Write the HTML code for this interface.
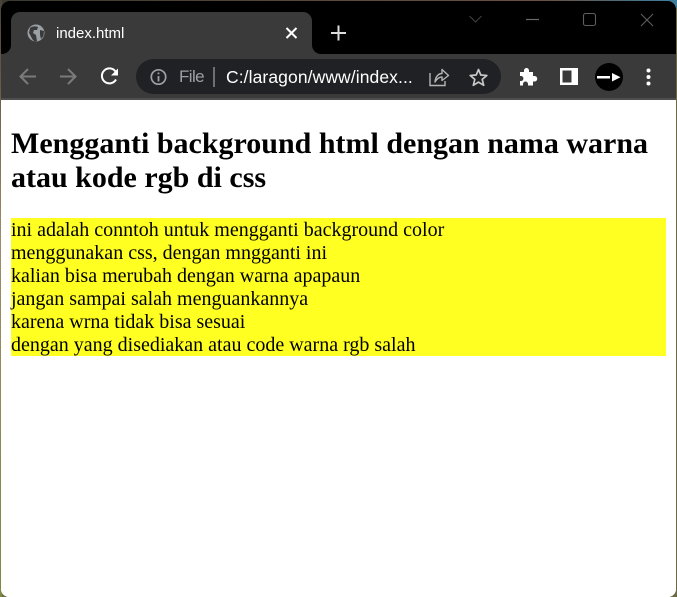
<!DOCTYPE html>
<html>
<head>
<meta charset="utf-8">
<style>
html,body{margin:0;padding:0;width:677px;height:597px;overflow:hidden;background:#6b6a45;}
#bgt{position:absolute;left:0;top:0;width:677px;height:8px;background:linear-gradient(90deg,#3a3a30 0,#5b4a3a 50%,#6a5040 80%,#3c7fa0 100%);}
#bgl{position:absolute;left:0;top:0;width:2px;height:597px;background:linear-gradient(180deg,#4a4238 0,#a08a6a 40%,#7c8a40 100%);}
#win{position:absolute;left:1px;top:1px;width:675px;height:596px;background:#fff;border-radius:8px 8px 8px 8px;overflow:hidden;}
#title{position:absolute;left:0;top:0;width:675px;height:53px;background:#000;}
#tool{position:absolute;left:0;top:53px;width:675px;height:44px;background:#3a3a3a;}
#sep{position:absolute;left:0;top:97px;width:675px;height:2px;background:#4e4e4e;}
#tab{position:absolute;left:10px;top:11px;width:301px;height:43px;background:#3a3a3a;border-radius:9px 9px 0 0;}
.t{position:absolute;white-space:nowrap;font-family:"Liberation Sans",sans-serif;}
#page{position:absolute;left:0;top:99px;width:675px;height:497px;background:#fff;}
h2{position:absolute;left:10px;top:27px;margin:0;width:655px;font:bold 30px/34px "Liberation Serif",serif;color:#000;}
#box{position:absolute;left:10px;top:118px;width:655px;height:138px;background:#ffff22;}
#txt{position:absolute;left:10px;top:119px;font:20px/23px "Liberation Serif",serif;color:#000;white-space:nowrap;}
svg{position:absolute;left:0;top:0;}
</style>
</head>
<body>
<div id="bgt"></div>
<div id="bgl"></div>
<div id="win">
  <div id="title"></div>
  <div id="tool"></div>
  <div id="sep"></div>
  <div id="tab"></div>
  <div class="t" style="left:55px;top:24px;font-size:15px;line-height:17px;color:#fff;">index.html</div>
  <div style="position:absolute;left:135px;top:58px;width:365px;height:35px;border-radius:18px;background:#202124;"></div>
  <div class="t" style="left:178px;top:66px;font-size:17px;letter-spacing:-.6px;line-height:20px;color:#9aa0a6;">File</div>
  <div style="position:absolute;left:212px;top:66px;width:2px;height:20px;background:#6d6f73;"></div>
  <div class="t" style="left:225px;top:66px;font-size:17.5px;letter-spacing:.09px;line-height:20px;color:#fff;">C:/laragon/www/index...</div>
  <div id="page">
    <h2>Mengganti background html dengan nama warna<br>atau kode rgb di css</h2>
    <div id="box"></div>
    <div id="txt">ini adalah conntoh untuk mengganti background color<br>menggunakan css, dengan mngganti ini<br>kalian bisa merubah dengan warna apapaun<br>jangan sampai salah menguankannya<br>karena wrna tidak bisa sesuai<br>dengan yang disediakan atau code warna rgb salah</div>
  </div>
</div>
<svg width="677" height="597" viewBox="0 0 677 597" fill="none">
  <!-- tab corners -->
  <path d="M2 54C7 54 11 50 11 45V54Z" fill="#3a3a3a"/>
  <path d="M312 45C312 50 316 54 321 54H312Z" fill="#3a3a3a"/>
  <!-- globe -->
  <circle cx="36" cy="33" r="8.5" fill="#9aa0a6"/>
  <path d="M30 28C32 26 36 26 38 27L37 30L34 30L33 33L36 35L37 41L35 41.500C32 40 31 36 29 33Z" fill="#3a3a3a"/>
  <path d="M40 30L44 31L43.500 36L41 39L40 35Z" fill="#3a3a3a"/>
  <!-- tab close -->
  <path d="M286.500 28L296.500 38M296.500 28L286.500 38" stroke="#fff" stroke-width="2"/>
  <!-- new tab -->
  <path d="M338.500 25.500V40.500M331 33H346" stroke="#dcdcdc" stroke-width="2"/>
  <!-- window controls -->
  <path d="M469.500 16L475.500 22L481.500 16" stroke="#3f3f3f" stroke-width="1.100"/>
  <path d="M526 19.500H539" stroke="#6a6a6a" stroke-width="1.200"/>
  <rect x="583.500" y="13.500" width="12" height="12" rx="2" stroke="#5e5e5e" stroke-width="1.100"/>
  <path d="M641 14L653 26M653 14L641 26" stroke="#5e5e5e" stroke-width="1.100"/>
  <!-- back -->
  <path d="M36 76.500H21M28 69L20.500 76.500L28 84" stroke="#7b7b7b" stroke-width="2"/>
  <!-- forward -->
  <path d="M60 76.500H75M68 69L75.500 76.500L68 84" stroke="#7b7b7b" stroke-width="2"/>
  <!-- reload -->
  <path d="M116 79.500A7.500 7.500 0 1 1 115.500 71.500" stroke="#fff" stroke-width="2"/>
  <path d="M118 68.500V75.500H111Z" fill="#fff"/>
  <!-- info -->
  <circle cx="158.500" cy="77" r="7.200" stroke="#9aa0a6" stroke-width="1.700"/>
  <path d="M158.500 76V81.500M158.500 72.500V74.300" stroke="#9aa0a6" stroke-width="1.800"/>
  <!-- share -->
  <path d="M430 73V85.500H445V81" stroke="#b5b5b5" stroke-width="1.400"/>
  <path d="M435 82C435.500 76 439 73.500 442 73.500V69.500L448.500 75.500L442 80.500V77C439.500 77 437 78.500 435 82Z" stroke="#b5b5b5" stroke-width="1.400" stroke-linejoin="round"/>
  <!-- star -->
  <path d="M478.500 69.500L480.800 75L486.800 75.500L482.200 79.400L483.700 85.300L478.500 82.100L473.300 85.300L474.800 79.400L470.200 75.500L476.200 75Z" stroke="#c8c8c8" stroke-width="1.700" stroke-linejoin="round"/>
  <!-- puzzle -->
  <path d="M520 72H524V70.500A2.500 2.500 0 0 1 529 70.500V72H533V76H534.500A2.700 2.700 0 0 1 534.500 81.500H533V85.500H528V84A2.500 2.500 0 0 0 523 84V85.500H520V81H521.500A2.600 2.600 0 0 0 521.500 76H520Z" fill="#fff"/>
  <!-- side panel -->
  <rect x="560" y="68" width="18" height="17" fill="#fff"/>
  <rect x="562.500" y="70.500" width="9" height="12" fill="#3a3a3a"/>
  <!-- avatar -->
  <circle cx="609" cy="77" r="14" fill="#000"/>
  <rect x="597" y="76" width="13" height="2.500" fill="#fff"/>
  <path d="M612 73L620.500 77.200L612 81.500Z" fill="#fff"/>
  <!-- menu -->
  <circle cx="648.500" cy="70.500" r="2" fill="#fff"/>
  <circle cx="648.500" cy="77" r="2" fill="#fff"/>
  <circle cx="648.500" cy="83.500" r="2" fill="#fff"/>
</svg>
</body>
</html>
